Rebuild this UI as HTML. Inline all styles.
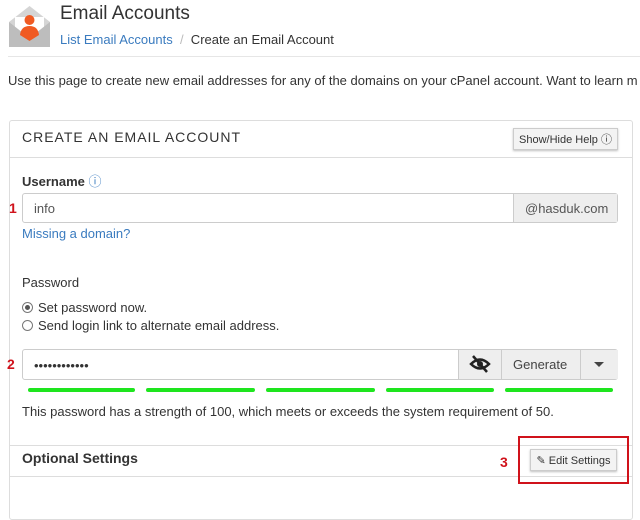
<!DOCTYPE html>
<html><head><style>
*{box-sizing:border-box;margin:0;padding:0}
body{width:640px;height:514px;overflow:hidden;background:#fff;font-family:"Liberation Sans",sans-serif;color:#333;font-size:13px;position:relative}
.a{position:absolute;white-space:nowrap}
.btn{position:absolute;background:#f3f3f3;border:1px solid #ccc;box-shadow:0 1px 2px rgba(0,0,0,.25);font-size:11px;display:flex;align-items:center;justify-content:center;color:#333}
.bar{position:absolute;top:388px;height:4px;background:#1ee51e;border-radius:2px}
.red{color:#d0121b;font-weight:bold;font-size:14px}
.rad{display:inline-block;width:11px;height:11px;border:1px solid #777;border-radius:50%;vertical-align:-1px;margin-right:5px;position:relative}
</style></head><body>
<svg class="a" style="left:8px;top:5px" width="43" height="43" viewBox="0 0 43 43">
<path d="M1 17 L21.5 1 L42 17 L42 42 L1 42Z" fill="#d5d5d5"/>
<path d="M7 12 H36 V30 H7Z" fill="#fff"/>
<path d="M1 17 L21.5 33 L42 17 L42 42 L1 42Z" fill="#bdbdbd"/>
<circle cx="21.5" cy="15" r="5" fill="#f05a22"/>
<path d="M12 30 Q13 21 21.5 21 Q30 21 31 30 L21.5 36Z" fill="#f05a22"/>
</svg>
<div class="a" style="left:60px;top:3px;font-size:19px;color:#333">Email Accounts</div>
<div class="a" style="left:60px;top:32px;font-size:13px"><span style="color:#3a7bbf">List Email Accounts</span> <span style="color:#bbb">&nbsp;/&nbsp;</span> Create an Email Account</div>
<div class="a" style="left:8px;top:56px;width:632px;height:1px;background:#e6e6e6"></div>
<div class="a" style="left:8px;top:73px">Use this page to create new email addresses for any of the domains on your cPanel account. Want to learn m</div>
<div class="a" style="left:9px;top:120px;width:624px;height:400px;border:1px solid #ddd;border-radius:3px;background:#fff"></div>
<div class="a" style="left:10px;top:157px;width:622px;height:1px;background:#ddd"></div>
<div class="a" style="left:22px;top:129px;font-size:14px;letter-spacing:1px;color:#333">CREATE AN EMAIL ACCOUNT</div>
<div class="btn" style="left:513px;top:128px;width:105px;height:22px">Show/Hide Help ⓘ</div>
<div class="a" style="left:22px;top:171px;font-weight:bold">Username <span style="color:#3a7bbf;font-weight:normal">ⓘ</span></div>
<div class="a red" style="left:9px;top:200px">1</div>
<div class="a" style="left:22px;top:193px;width:596px;height:30px;border:1px solid #ccc;border-radius:3px"></div>
<div class="a" style="left:513px;top:194px;width:104px;height:28px;background:#eee;border-left:1px solid #ccc;color:#555;padding:7px 0 0 11px">@hasduk.com</div>
<div class="a" style="left:34px;top:201px;color:#555">info</div>
<div class="a" style="left:22px;top:226px;color:#3a7bbf">Missing a domain?</div>
<div class="a" style="left:22px;top:275px">Password</div>
<div class="a" style="left:22px;top:300px"><span class="rad"><span style="position:absolute;left:2px;top:2px;width:5px;height:5px;border-radius:50%;background:#555"></span></span>Set password now.</div>
<div class="a" style="left:22px;top:318px"><span class="rad"></span>Send login link to alternate email address.</div>
<div class="a red" style="left:7px;top:356px">2</div>
<div class="a" style="left:22px;top:349px;width:596px;height:31px;border:1px solid #ccc;border-radius:3px"></div>
<div class="a" style="left:34px;top:358px">••••••••••••</div>
<div class="a" style="left:458px;top:350px;width:160px;height:29px;background:#eee;border-left:1px solid #ccc"></div>
<div class="a" style="left:501px;top:350px;width:1px;height:29px;background:#ccc"></div>
<div class="a" style="left:580px;top:350px;width:1px;height:29px;background:#ccc"></div>
<svg class="a" style="left:469px;top:355px" width="22" height="18" viewBox="0 0 22 18"><path d="M2 9 Q11 0 20 9 Q11 18 2 9Z" fill="none" stroke="#222" stroke-width="2.5"/><circle cx="11" cy="9" r="3" fill="#222"/><path d="M4 1 L18 17" stroke="#222" stroke-width="2.5"/></svg>
<div class="a" style="left:513px;top:357px;color:#444">Generate</div>
<div class="a" style="left:594px;top:362px;width:0;height:0;border-left:5px solid transparent;border-right:5px solid transparent;border-top:5px solid #444"></div>
<div class="bar" style="left:28px;width:107px"></div>
<div class="bar" style="left:146px;width:109px"></div>
<div class="bar" style="left:266px;width:109px"></div>
<div class="bar" style="left:386px;width:108px"></div>
<div class="bar" style="left:505px;width:108px"></div>
<div class="a" style="left:22px;top:404px">This password has a strength of 100, which meets or exceeds the system requirement of 50.</div>
<div class="a" style="left:10px;top:445px;width:622px;height:1px;background:#ddd"></div>
<div class="a" style="left:10px;top:476px;width:622px;height:1px;background:#ddd"></div>
<div class="a" style="left:22px;top:450px;font-weight:bold;font-size:14px">Optional Settings</div>
<div class="a red" style="left:500px;top:454px">3</div>
<div class="a" style="left:518px;top:436px;width:111px;height:48px;border:2px solid #d0121b"></div>
<div class="btn" style="left:530px;top:449px;width:87px;height:22px">✎ Edit Settings</div>
</body></html>
